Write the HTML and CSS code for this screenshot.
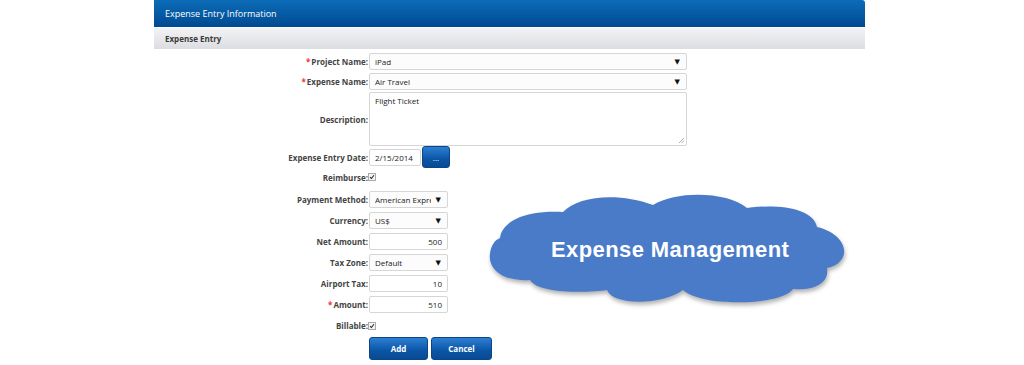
FILE: index.html
```html
<!DOCTYPE html>
<html>
<head>
<meta charset="utf-8">
<link rel="stylesheet" href="styles.css">
</head>
<body>
<div class="page">
  <div class="panel">
    <div class="title">Expense Entry Information</div>
    <div class="subtitle">Expense Entry</div>
    <div class="form">
      <div class="row r-first">
        <div class="label"><span class="req">*</span>Project Name:</div>
        <div class="field wide sel"><span>iPad</span><span class="arrow">▼</span></div>
      </div>
      <div class="row">
        <div class="label"><span class="req">*</span>Expense Name:</div>
        <div class="field wide sel"><span>Air Travel</span><span class="arrow">▼</span></div>
      </div>
      <div class="row r-desc">
        <div class="label">Description:</div>
        <div class="field area"><span>Flight Ticket</span>
          <svg class="grip" width="7" height="7" viewBox="0 0 7 7"><path d="M6 1 L1 6 M6 3.5 L3.5 6" stroke="#999" stroke-width="0.8"/></svg>
        </div>
      </div>
      <div class="row r-date">
        <div class="label">Expense Entry Date:</div>
        <div class="field date"><span>2/15/2014</span></div>
        <div class="btn dots">...</div>
      </div>
      <div class="row r-check">
        <div class="label">Reimburse:</div>
        <div class="check"><svg width="8" height="8" viewBox="0 0 8 8"><path d="M1.5 4.2 L3.2 6 L6.6 1.6" stroke="#222" stroke-width="1.4" fill="none"/></svg></div>
      </div>
      <div class="row r-pay">
        <div class="label">Payment Method:</div>
        <div class="field small sel"><span class="clip">American Express</span><span class="arrow">▼</span></div>
      </div>
      <div class="row">
        <div class="label">Currency:</div>
        <div class="field small sel"><span>US$</span><span class="arrow">▼</span></div>
      </div>
      <div class="row">
        <div class="label">Net Amount:</div>
        <div class="field small num"><span>500</span></div>
      </div>
      <div class="row">
        <div class="label">Tax Zone:</div>
        <div class="field small sel"><span>Default</span><span class="arrow">▼</span></div>
      </div>
      <div class="row">
        <div class="label">Airport Tax:</div>
        <div class="field small num"><span>10</span></div>
      </div>
      <div class="row">
        <div class="label"><span class="req">*</span>Amount:</div>
        <div class="field small num"><span>510</span></div>
      </div>
      <div class="row">
        <div class="label">Billable:</div>
        <div class="check"><svg width="8" height="8" viewBox="0 0 8 8"><path d="M1.5 4.2 L3.2 6 L6.6 1.6" stroke="#222" stroke-width="1.4" fill="none"/></svg></div>
      </div>
      <div class="row r-btns">
        <div class="label"></div>
        <div class="btn action add">Add</div>
        <div class="btn action cancel">Cancel</div>
      </div>
    </div>
  </div>
  <div class="cloud">
    <svg class="cloud-shape" width="364" height="122" viewBox="0 0 364 122">
      <path d="M12 48 C14 30 40 20 75 22 C90 6 130 2 165 15 C190 0 240 2 259 18 C290 14 325 18 329 37 C360 44 366 72 339 78 C342 95 322 101 305 99 C295 115 215 118 195 100 C175 115 125 116 119 100 C100 103 50 104 42 90 C14 92 0 78 2 64 C3 55 7 50 12 48 Z" fill="#4a7bc9"/>
    </svg>
    <div class="cloud-text">Expense Management</div>
  </div>
</div>
</body>
</html>
```
FILE: styles.css
```css
html, body {
  margin: 0;
  padding: 0;
  background: #ffffff;
}
.page {
  position: relative;
  width: 1024px;
  height: 365px;
  overflow: hidden;
  font-family: "Open Sans", "DejaVu Sans", sans-serif;
}
.panel {
  margin-left: 154px;
  width: 711px;
}
.title {
  height: 27px;
  box-sizing: border-box;
  padding-left: 11px;
  line-height: 27px;
  font-size: 9px;
  color: #ffffff;
  background: linear-gradient(#0c6cb7, #004a91);
  border-radius: 0 3px 0 0;
}
.subtitle {
  margin-top: 1px;
  height: 21px;
  box-sizing: border-box;
  padding-left: 11px;
  line-height: 21px;
  font-size: 8px;
  font-weight: bold;
  color: #3a3a3a;
  background: linear-gradient(#f3f3f5, #dcdde1);
}
.form {
  display: flex;
  flex-direction: column;
}
.row {
  display: flex;
  align-items: center;
  height: 21px;
}
.r-first { margin-top: 2px; height: 20px; }
.r-desc { height: 54px; }
.r-date { height: 22px; }
.r-check { height: 18px; }
.r-pay { margin-top: 3px; }
.r-btns { height: 23px; margin-top: 1px; }
.label {
  width: 214px;
  flex: none;
  text-align: right;
  font-size: 8px;
  font-weight: bold;
  color: #444444;
  white-space: nowrap;
}
.req {
  color: #e8383d;
  margin-right: 1px;
}
.field {
  box-sizing: border-box;
  height: 17px;
  margin-left: 1px;
  border: 1px solid #d6d6d6;
  border-radius: 2px;
  background: #ffffff;
  font-size: 8px;
  color: #222222;
  display: flex;
  align-items: center;
  padding: 0 6px 0 5px;
  white-space: nowrap;
  overflow: hidden;
}
.sel { justify-content: space-between; background: #fcfcfc; }
.clip {
  display: block;
  width: 56px;
  overflow: hidden;
}
.arrow { font-size: 7px; color: #111; flex: none; }
.wide { width: 318px; }
.small { width: 79px; }
.num { justify-content: flex-end; padding-right: 5px; }
.area {
  position: relative;
  width: 318px;
  height: 54px;
  align-items: flex-start;
  padding-top: 2px;
}
.grip { position: absolute; right: 1px; bottom: 1px; }
.date { width: 52px; }
.btn {
  box-sizing: border-box;
  display: flex;
  align-items: center;
  justify-content: center;
  color: #ffffff;
  font-weight: bold;
  font-size: 8px;
  background: linear-gradient(#2c7fd2, #0b55a6 60%, #084a94);
  border: 1px solid #0a4585;
  border-radius: 3px;
}
.dots {
  width: 28px;
  height: 22px;
  margin-left: 1px;
  align-self: flex-start;
  font-weight: normal;
}
.check {
  width: 8px;
  height: 8px;
  box-sizing: border-box;
  border: 1px solid #aaa;
  background: #f4f4f4;
  display: flex;
  align-items: center;
  justify-content: center;
}
.check svg { display: block; }
.action { height: 23px; }
.add { width: 59px; margin-left: 1px; }
.cancel { width: 61px; margin-left: 3px; }
.cloud {
  position: absolute;
  left: 488px;
  top: 190px;
  width: 364px;
  height: 122px;
}
.cloud-shape {
  display: block;
  filter: drop-shadow(1px 3px 2px rgba(0,0,0,0.3));
}
.cloud-text {
  position: absolute;
  left: 63px;
  top: 47px;
  font-family: "Liberation Sans", Arial, sans-serif;
  font-weight: bold;
  font-size: 22px;
  letter-spacing: 0.4px;
  color: #ffffff;
  white-space: nowrap;
}
```
